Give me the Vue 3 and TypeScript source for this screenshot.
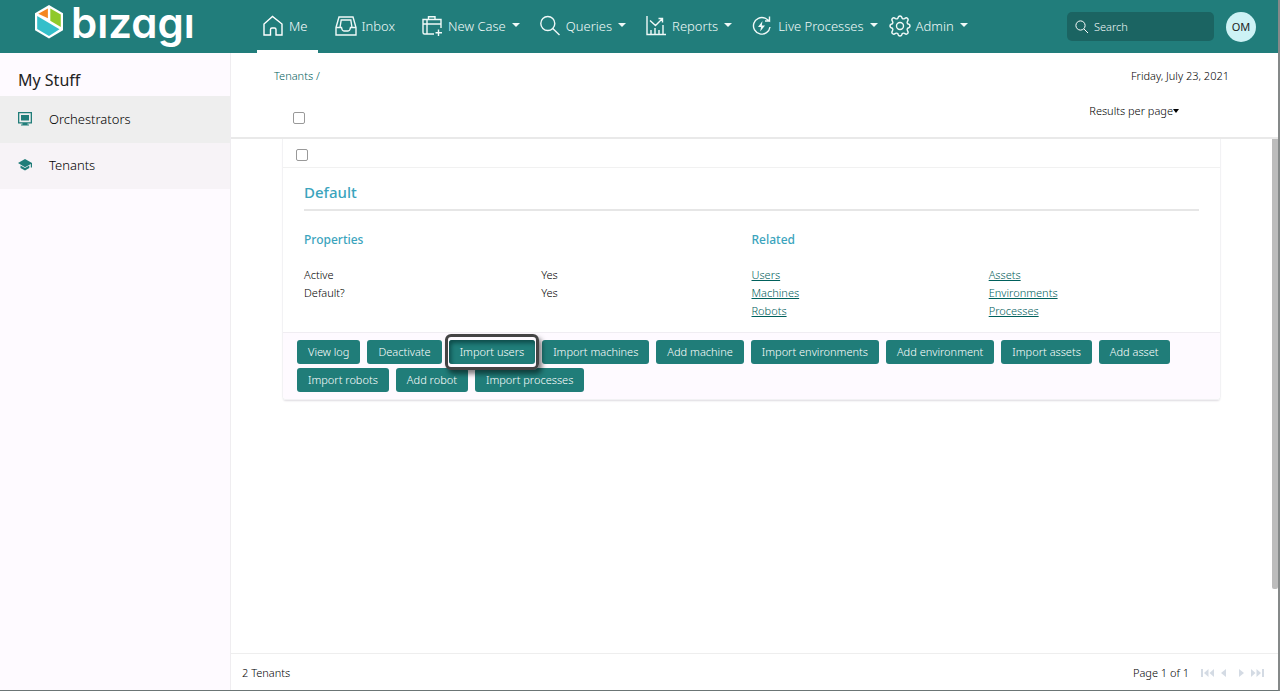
<script setup lang="ts">
import { ref } from 'vue'

interface NavItem {
  id: string
  label: string
  menu: boolean
}

const navItems: NavItem[] = [
  { id: 'me', label: 'Me', menu: false },
  { id: 'inbox', label: 'Inbox', menu: false },
  { id: 'new-case', label: 'New Case', menu: true },
  { id: 'queries', label: 'Queries', menu: true },
  { id: 'reports', label: 'Reports', menu: true },
  { id: 'live', label: 'Live Processes', menu: true },
  { id: 'admin', label: 'Admin', menu: true },
]

const properties = [
  { name: 'Active', value: 'Yes' },
  { name: 'Default?', value: 'Yes' },
]

const related = ['Users', 'Assets', 'Machines', 'Environments', 'Robots', 'Processes']

const actions = [
  'View log',
  'Deactivate',
  'Import users',
  'Import machines',
  'Add machine',
  'Import environments',
  'Add environment',
  'Import assets',
  'Add asset',
  'Import robots',
  'Add robot',
  'Import processes',
]

const current = ref('me')
const highlighted = ref('Import users')
const search = ref('')
const allSelected = ref(false)
const cardSelected = ref(false)
</script>

<template>
  <div class="app">
    <header class="topbar">
      <a class="brand" href="#" aria-label="bizagi">
        <svg class="brand-mark" viewBox="0 0 30 36" width="30" height="36" aria-hidden="true">
          <path d="M15 1 29 9.300V26.200L15 34.500 1 26.200V9.300Z" fill="#fff" />
          <path d="M13.900 4.400V14.200L4.300 9.700Z" fill="#f5861f" />
          <path d="M16.300 4.400 26.800 10.400V23L16.300 16.800Z" fill="#8fc92b" />
          <path d="M3.200 12 25.500 25.200 15 32 3.200 25Z" fill="#35bfca" />
        </svg>
        <span class="brand-name">bızagı</span>
      </a>

      <nav class="nav" aria-label="Main">
        <a
          v-for="item in navItems"
          :key="item.id"
          href="#"
          class="nav-item"
          :class="[item.id, { active: item.id === current, menu: item.menu }]"
          @click.prevent="current = item.id"
        >
          <svg class="nav-icon" viewBox="0 0 22 22" width="22" height="22" aria-hidden="true">
            <path v-if="item.id === 'me'" d="M2 20V9L10.500 1.500 20 9V20H14V14.500Q14 13 12.500 13H10Q8.500 13 8.500 14.500V20Z" />
            <g v-else-if="item.id === 'inbox'">
              <path d="M1 12.500 4 2H18L21 12.500V20H1Z" />
              <path d="M5 12.500 6.200 5H15.800L17 12.500M1 12.500H6.500Q7 16 9 16H13Q15 16 15.500 12.500H21" />
            </g>
            <g v-else-if="item.id === 'new-case'">
              <path d="M13 19H3.500Q2 19 2 17.500V4.500H20V13M2 9H20M6 5V19M7.500 4.500V1.800H14V4.500M17.500 14.500V21M14.500 17.800H21" />
            </g>
            <g v-else-if="item.id === 'queries'">
              <circle cx="8.800" cy="8.500" r="7" />
              <path d="M13.800 13.500 20.500 20" />
            </g>
            <g v-else-if="item.id === 'reports'">
              <path d="M2 1V19.500H21M6 19V15M10 19V13M14 19V15M18 19V10M5 5.500 10.500 10.500 17.500 3.500M13.500 3.500H17.500V7.500" />
            </g>
            <g v-else-if="item.id === 'live'">
              <path d="M14 3.200A8.300 8.300 0 1 0 19 12M14 3 18.500 6V1.500M14 6H18.500" />
              <path class="solid" d="M11.500 6 7 12H10L9.200 16.500 14 10.500H10.800Z" />
            </g>
            <g v-else>
              <path d="M8.800 3.400Q9.300 1 11 1T13.200 3.400Q14.300 4.300 15.500 3.600 17.400 2.200 18.600 3.400T18.400 6.500Q17.700 7.700 18.600 8.800 21 9.300 21 11T18.600 13.200Q17.700 14.300 18.400 15.500 19.800 17.400 18.600 18.600T15.500 18.400Q14.300 17.700 13.200 18.600 12.700 21 11 21T8.800 18.600Q7.700 17.700 6.500 18.400 4.600 19.800 3.400 18.600T3.600 15.500Q4.300 14.300 3.400 13.200 1 12.700 1 11T3.400 8.800Q4.300 7.700 3.600 6.500 2.200 4.600 3.400 3.400T6.500 3.600Q7.700 4.300 8.800 3.400Z" />
              <circle cx="11" cy="11" r="3.500" />
            </g>
          </svg>
          <span>{{ item.label }}</span>
          <i v-if="item.menu" class="caret"></i>
        </a>
      </nav>

      <label class="search">
        <svg viewBox="0 0 14 14" width="14" height="14" aria-hidden="true">
          <circle cx="5.500" cy="5.500" r="4.600" />
          <path d="M9 9 13 13" />
        </svg>
        <input v-model="search" type="text" placeholder="Search" aria-label="Search" />
      </label>
      <button class="avatar" type="button" aria-label="Account OM">OM</button>
    </header>

    <div class="body">
      <aside class="sidebar">
        <h1>My Stuff</h1>
        <a href="#" class="side-item selected">
          <svg viewBox="0 0 16 16" width="16" height="16" aria-hidden="true">
            <path fill-rule="evenodd" d="M1 1H15V12.500H10.500V13.500H12V14.500H4V13.500H5.500V12.500H1ZM2.300 2.300V11.200H13.700V2.300ZM4 4H12V9.500H4Z" />
          </svg>
          Orchestrators
        </a>
        <a href="#" class="side-item">
          <svg viewBox="0 0 16 16" width="16" height="16" aria-hidden="true">
            <path d="M1 6 8 2 15 6V10.500H13.800V7L8 10.200ZM3.500 8.500 8 11 12.300 8.600V11L8 13.500 3.500 11Z" />
          </svg>
          Tenants
        </a>
      </aside>

      <main class="main">
        <div class="list-head">
          <div class="head-row">
            <a href="#" class="crumb">Tenants /</a>
            <time datetime="2021-07-23">Friday, July 23, 2021</time>
          </div>
          <div class="head-row tools">
            <input v-model="allSelected" type="checkbox" aria-label="Select all tenants" />
            <button type="button" class="per-page">Results per page<i class="caret"></i></button>
          </div>
        </div>

        <section class="scroll">
          <article class="card">
            <div class="card-select">
              <input v-model="cardSelected" type="checkbox" aria-label="Select Default" />
            </div>
            <div class="card-body">
              <h2>Default</h2>
              <div class="columns">
                <section>
                  <h3>Properties</h3>
                  <dl class="pairs">
                    <template v-for="p in properties" :key="p.name">
                      <dt>{{ p.name }}</dt>
                      <dd>{{ p.value }}</dd>
                    </template>
                  </dl>
                </section>
                <section>
                  <h3>Related</h3>
                  <div class="pairs">
                    <span v-for="r in related" :key="r"><a href="#">{{ r }}</a></span>
                  </div>
                </section>
              </div>
            </div>
            <div class="actions">
              <button
                v-for="a in actions"
                :key="a"
                type="button"
                :class="{ marked: a === highlighted }"
              >{{ a }}</button>
            </div>
          </article>
          <div class="thumb"></div>
        </section>

        <footer class="pager">
          <span class="count">2 Tenants</span>
          <span>Page 1 of 1</span>
          <div class="pager-buttons">
            <button type="button" aria-label="First page" disabled>
              <svg viewBox="0 0 14 8" width="14" height="8"><path d="M0 0H2V8H0ZM7.500 0V8L3 4ZM13 0V8L8.500 4Z" /></svg>
            </button>
            <button type="button" aria-label="Previous page" disabled>
              <svg viewBox="0 0 5 8" width="5" height="8"><path d="M5 0V8L0 4Z" /></svg>
            </button>
            <button type="button" class="next" aria-label="Next page" disabled>
              <svg viewBox="0 0 5 8" width="5" height="8"><path d="M0 0V8L5 4Z" /></svg>
            </button>
            <button type="button" aria-label="Last page" disabled>
              <svg viewBox="0 0 14 8" width="14" height="8"><path d="M1 0V8L5.500 4ZM6.500 0V8L11 4ZM12 0H14V8H12Z" /></svg>
            </button>
          </div>
        </footer>
      </main>
    </div>
  </div>
</template>

<style>
body {
  margin: 0;
}
</style>

<style scoped>
* {
  box-sizing: border-box;
}

.app {
  display: flex;
  flex-direction: column;
  min-height: 100vh;
  border-right: 2px solid #858989;
  border-bottom: 1px solid #6b7575;
  background: #fff;
  color: #000;
  font: 300 11px/18px "Noto Sans", "Open Sans", sans-serif;
}

button,
input {
  font: inherit;
}

a {
  color: #00605c;
  text-decoration: none;
}

.topbar {
  display: flex;
  align-items: center;
  height: 53px;
  background: #217d7b;
  color: #fff;
}

.brand {
  display: flex;
  width: 223px;
  flex: none;
  align-items: flex-start;
  align-self: flex-start;
  gap: 7px;
  height: 53px;
  margin-left: 34px;
  color: #fff;
}

.brand-mark {
  flex: none;
  margin-top: 4px;
}

.brand-name {
  font: 600 42px/46px Inter, sans-serif;
  font-feature-settings: "cv11";
}

.nav {
  display: flex;
  flex: 1;
  align-self: stretch;
}

.nav-item {
  display: flex;
  align-items: center;
  margin-right: 11px;
  padding: 2px 10px 0 5px;
  border-bottom: 3px solid transparent;
  color: #f0f9f8;
  font-size: 13px;
  white-space: nowrap;
}

.nav-item.me {
  margin-right: 12px;
}

.nav-item.active {
  border-color: #fff;
  color: #fff;
}

.nav-item.menu {
  margin-right: 4px;
}

.nav-item.live {
  margin-right: 0;
  padding-right: 6px;
}

.nav-icon {
  flex: none;
  margin-right: 5px;
  fill: none;
  stroke: currentColor;
  stroke-width: 1.4;
}

.nav-icon .solid {
  fill: currentColor;
  stroke: none;
}

.caret {
  width: 0;
  height: 0;
  border: 4px solid transparent;
  border-top-color: currentColor;
  border-bottom: 0;
}

.nav-item .caret {
  margin: 0 0 3px 6px;
}

.search {
  display: flex;
  align-items: center;
  gap: 5px;
  width: 147px;
  height: 29px;
  padding: 0 8px;
  border-radius: 5px;
  background: #1b6462;
}

.search svg {
  flex: none;
  fill: none;
  stroke: #fff;
}

.search input {
  min-width: 0;
  flex: 1;
  padding: 0;
  border: 0;
  outline: 0;
  background: none;
  color: #fff;
}

.search input::placeholder {
  color: #f2fafa;
  opacity: 1;
}

.avatar {
  width: 30px;
  height: 30px;
  margin: 0 22px 0 12px;
  padding: 0;
  border: 0;
  border-radius: 50%;
  background: #cdf2f5;
  color: #222;
  font-weight: 400;
}

.body {
  display: flex;
  flex: 1;
}

.sidebar {
  flex: none;
  width: 231px;
  border-right: 1px solid #efedf0;
  background: #fefaff;
}

.sidebar h1 {
  margin: 0;
  padding: 15px 18px 4px;
  color: #222;
  font-size: 16px;
  font-weight: 400;
  line-height: 24px;
}

.side-item {
  display: flex;
  align-items: center;
  gap: 16px;
  height: 46px;
  padding: 0 0 2px 17px;
  background: #f7f3f7;
  color: #000;
  font-size: 13px;
}

.side-item.selected {
  height: 47px;
  background: #eee;
}

.side-item svg {
  fill: #207d79;
}

.main {
  display: flex;
  flex: 1;
  flex-direction: column;
  min-width: 0;
}

.list-head {
  height: 86px;
  padding: 14px 49px 0 43px;
  border-bottom: 2px solid #e9e9e9;
}

.head-row {
  display: flex;
  align-items: center;
  justify-content: space-between;
}

.tools {
  padding: 13px 50px 0 19px;
}

.per-page {
  display: flex;
  align-items: center;
  padding: 0;
  border: 0;
  background: none;
  color: #000;
}

.tools input {
  margin-top: 14px;
}

.per-page .caret {
  border-width: 4px 3px 0;
}

input[type="checkbox"] {
  width: 12px;
  height: 12px;
  margin-right: 0;
  margin-bottom: 0;
  margin-left: 0;
  appearance: none;
  border: 1px solid #999;
  border-radius: 2px;
  background: #fff;
}

.scroll {
  position: relative;
  flex: 1;
  padding: 0 57px 0 51px;
}

.thumb {
  position: absolute;
  top: 0;
  right: 0;
  width: 6px;
  height: 87.5%;
  border-radius: 0 0 2px 2px;
  background: #bcbcbc;
}

.card {
  border: 1px solid #f2f2f4;
  border-top: 0;
  border-radius: 0 0 4px 4px;
  box-shadow: 0 2px 2px -1px #dedbe0;
}

.card-select {
  display: flex;
  align-items: center;
  height: 29px;
  padding: 0 0 0 13px;
  border-bottom: 1px solid #f1f1f1;
}

.card-body {
  padding: 12px 21px;
}

h2 {
  margin: 0;
  padding-bottom: 5px;
  border-bottom: 2px solid #e6e6e6;
  color: #3ba4bd;
  font-size: 15px;
  font-weight: 500;
  line-height: 24px;
}

.columns {
  display: grid;
  grid-template-columns: 1fr 1fr;
}

h3 {
  margin: 20px 0 17px;
  color: #3ba4bd;
  font-size: 12px;
  font-weight: 500;
  line-height: 18px;
}

.pairs {
  display: grid;
  grid-template-columns: 53fr 47fr;
  margin: 0;
}

.pairs dd {
  margin: 0;
}

.pairs a {
  text-decoration: underline;
}

.actions {
  display: flex;
  flex-wrap: wrap;
  gap: 4px 7px;
  padding: 7px 14px;
  border-top: 1px solid #f0edf2;
  border-radius: 0 0 4px 4px;
  background: #fefaff;
}

.actions button {
  position: relative;
  height: 24px;
  padding: 0 11px;
  border: 0;
  border-radius: 3px;
  background: #207d79;
  color: #fff;
  white-space: nowrap;
}

.actions .marked {
  z-index: 1;
  box-shadow: inset 2px 3px 4px #0e4d4b;
}

.marked::after {
  position: absolute;
  inset: -6px -4px;
  border: 3px solid #444;
  border-radius: 6px;
  box-shadow: 3px 4px 5px rgba(0, 0, 0, 0.5);
  content: "";
}

.pager {
  display: flex;
  align-items: center;
  height: 37px;
  padding: 2px 14px 0 11px;
  border-top: 1px solid #eee;
}

.count {
  flex: 1;
}

.pager-buttons {
  display: flex;
  gap: 6px;
  margin-left: 12px;
}

.pager-buttons button {
  display: flex;
  padding: 0;
  border: 0;
  background: none;
}

.pager-buttons .next {
  margin-left: 7px;
}

.pager-buttons svg {
  fill: #d4dbe4;
}
</style>
